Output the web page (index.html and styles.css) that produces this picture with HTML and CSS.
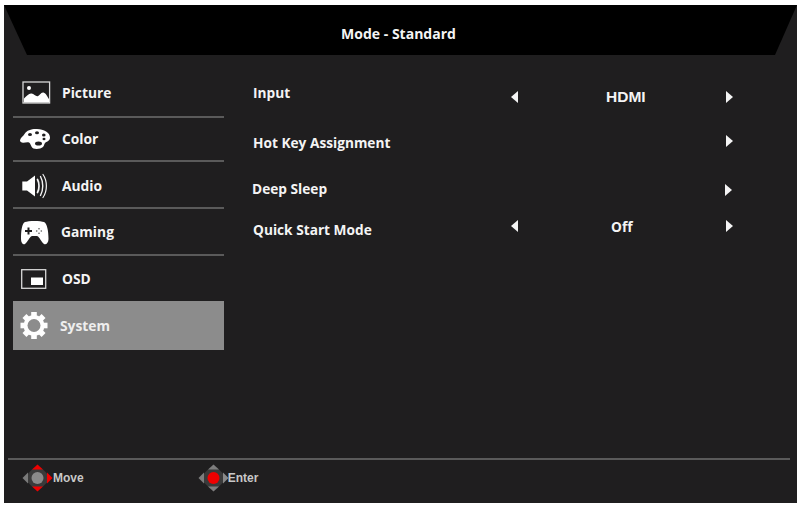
FILE: index.html
```html
<!DOCTYPE html>
<html lang="en">
<head>
<meta charset="utf-8">
<title>Mode - Standard</title>
<link rel="stylesheet" href="styles.css">
</head>
<body>
<div class="panel">
  <header class="header">Mode - Standard</header>
  <main class="main">
    <nav class="sidebar">
      <div class="item item-picture">
        <svg class="icon" width="49" height="24" viewBox="0 0 49 24"><rect x="10" y="1" width="26.600" height="21" fill="none" stroke="#d8d8d8" stroke-width="1.300"/><circle cx="16" cy="7" r="2" fill="#fff"/><path d="M11 21.400V17.600C13.500 15 16 12 18.500 12.500C21 13 22.500 15.400 24.500 15.200C26.500 15 28 10.800 30.500 11.500C33 12.200 34.500 16 36 18V21.400Z" fill="#fff"/></svg>
        <span class="label">Picture</span>
      </div>
      <div class="item item-color">
        <svg class="icon" width="49" height="22" viewBox="0 0 49 22"><path fill="#fff" fill-rule="evenodd" d="M7 12.200C7.500 9.500 10 8.500 11.500 6C14 2 19 .7 24 1C31 1.300 37 4.500 37 9.500C37 12.500 34.500 13.400 32.500 14.500C31 15.500 31.500 17.500 30 19C28 21 23 21.500 20.500 20.500C18 19.500 18 15.800 16 14.500C14 13.500 12 15 10 14.800C8.500 14.600 6.800 13.800 7 12.200ZM15 6.500a2 1.500 0 1 0 4 0a2 1.500 0 1 0-4 0ZM22 4.800a2 1.500 0 1 0 4 0a2 1.500 0 1 0-4 0ZM29 7a1.800 1.500 0 1 0 3.600 0a1.800 1.500 0 1 0-3.600 0ZM29.500 11a1.500 1.300 0 1 0 3 0a1.500 1.300 0 1 0-3 0ZM22 15.500a3.500 2 0 1 0 7 0a3.500 2 0 1 0-7 0Z"/></svg>
        <span class="label">Color</span>
      </div>
      <div class="item item-audio">
        <svg class="icon" width="49" height="26" viewBox="0 0 49 26"><path fill="#fff" d="M9.300 8.500H14L22 2.500V23.500L14 17.500H9.300Z"/><g fill="none" stroke="#f4f4f4" stroke-linecap="round"><path stroke-width="1.700" d="M24.500 6.500C26.500 10 26.500 16 24.500 19.500"/><path stroke-width="1.400" d="M27.500 3.500C30.500 9 30.500 17 27.500 22.500"/><path stroke-width="1.200" d="M30 1.500C34.500 8 34.500 18 30 24.500"/></g></svg>
        <span class="label">Audio</span>
      </div>
      <div class="item item-gaming">
        <svg class="icon" width="49" height="26" viewBox="0 0 49 26"><path fill="#fff" d="M12 3C15 1.500 28 1.500 31 3C34 4 35.500 12 35.500 20C35.500 24 33 26 31 25C28 23 27 18 24 17H19C16 18 15 23 12 25C10 26 8 24 8 20C8 12 9 4 12 3Z"/><path fill="#1f1e1f" d="M12 11H14.500V8.500H16.500V11H19V13H16.500V15.500H14.500V13H12Z"/><g fill="#555"><circle cx="26" cy="9.800" r=".8"/><circle cx="28.300" cy="12" r=".8"/><circle cx="23.700" cy="12" r=".8"/><circle cx="26" cy="14.200" r=".8"/></g></svg>
        <span class="label">Gaming</span>
      </div>
      <div class="item item-osd">
        <svg class="icon" width="49" height="20" viewBox="0 0 49 20"><rect x="8.700" y=".7" width="24" height="18.600" fill="none" stroke="#d8d8d8" stroke-width="1.300"/><rect x="18" y="8.500" width="12" height="7.500" fill="#fff"/></svg>
        <span class="label">OSD</span>
      </div>
      <div class="item item-system">
        <svg class="icon" width="49" height="29" viewBox="0 0 49 29"><g fill="#fff"><rect x="18.200" y="1" width="5.600" height="27"/><rect x="18.200" y="1" width="5.600" height="27" transform="rotate(45 21 14.500)"/><rect x="18.200" y="1" width="5.600" height="27" transform="rotate(90 21 14.500)"/><rect x="18.200" y="1" width="5.600" height="27" transform="rotate(135 21 14.500)"/></g><circle cx="21" cy="14.500" r="10.500" fill="#fff"/><circle cx="21" cy="14.500" r="6.500" fill="#8c8c8c"/></svg>
        <span class="label">System</span>
      </div>
    </nav>
    <section class="content">
      <div class="row row-input">
        <span class="row-label">Input</span>
        <span class="arrow-left"></span>
        <span class="value value-input">HDMI</span>
        <span class="arrow-right"></span>
      </div>
      <div class="row row-hotkey">
        <span class="row-label">Hot Key Assignment</span>
        <span class="arrow-right"></span>
      </div>
      <div class="row row-sleep">
        <span class="row-label">Deep Sleep</span>
        <span class="arrow-right"></span>
      </div>
      <div class="row row-quick">
        <span class="row-label">Quick Start Mode</span>
        <span class="arrow-left"></span>
        <span class="value value-off">Off</span>
        <span class="arrow-right"></span>
      </div>
    </section>
  </main>
  <footer class="footer">
    <div class="hint hint-move">
      <svg width="31" height="28" viewBox="0 0 31 28"><path fill="#3a3a3a" d="M10.500 5H20.500L25 9.500V18.500L20.500 23H10.500L6 18.500V9.500Z"/><path fill="#f00000" d="M15.500 .5L21 5.500H10Z"/><path fill="#f00000" d="M15.500 27.500L10 22.500H21Z"/><path fill="#f00000" d="M30.500 14L25 19.500V8.500Z"/><path fill="#7a7a7a" d="M.5 14L6 8.500V19.500Z"/><circle cx="15.500" cy="14" r="6" fill="#8a8a8a"/></svg>
      <span>Move</span>
    </div>
    <div class="hint hint-enter">
      <svg width="31" height="28" viewBox="0 0 31 28"><path fill="#3a3a3a" d="M10.500 5H20.500L25 9.500V18.500L20.500 23H10.500L6 18.500V9.500Z"/><path fill="#7d7d7d" d="M15.500 .5L21 5.500H10Z"/><path fill="#7d7d7d" d="M15.500 27.500L10 22.500H21Z"/><path fill="#8a8a8a" d="M30.500 14L25 19.500V8.500Z"/><path fill="#7d7d7d" d="M.5 14L6 8.500V19.500Z"/><circle cx="15.500" cy="14" r="6" fill="#f00000"/></svg>
      <span class="hint-enter-label">Enter</span>
    </div>
  </footer>
</div>
</body>
</html>
```
FILE: styles.css
```css
* { box-sizing: border-box; }
html, body { margin: 0; padding: 0; background: #fff; }
body { font-family: "Open Sans", "Liberation Sans", sans-serif; }
.panel {
  width: 793px;
  height: 498px;
  margin: 5px 0 0 4px;
  background: #1f1e1f;
  display: flex;
  flex-direction: column;
}
.header {
  height: 50px;
  flex: none;
  background: #000;
  clip-path: polygon(0 0, 100% 0, 771px 100%, 23px 100%);
  color: #f4f4f4;
  font-weight: 700;
  font-size: 14px;
  display: flex;
  align-items: center;
  justify-content: center;
  padding: 7px 4px 0 0;
}
.main { flex: 1; display: flex; }
.sidebar {
  width: 211px;
  margin: 15px 0 0 9px;
  flex: none;
}
.item {
  display: flex;
  align-items: center;
  border-bottom: 2px solid #5a5a5a;
  color: #f4f4f4;
  font-weight: 700;
  font-size: 13.800px;
}
.icon { flex: none; }
.label { margin-bottom: 1px; }
.item-picture { height: 48px; }
.item-color { height: 44px; }
.item-audio { height: 47px; padding-top: 3px; }
.item-gaming { height: 47px; }
.item-osd { height: 45px; border-bottom: 0; }
.item-system { height: 49px; border-bottom: 0; background: #8c8c8c; color: #eee; }
.item-gaming .label { margin-left: -1px; }
.item-system .label { margin-left: -2px; }
.content { flex: 1; padding: 31px 0 0 29px; color: #f4f4f4; font-size: 13.700px; font-weight: 700; }
.row { display: flex; align-items: center; position: relative; }
.row-label { width: 255px; flex: none; }
.row-input { height: 20px; }
.arrow-left, .arrow-right {
  width: 0; height: 0; flex: none;
  border-top: 6.500px solid transparent;
  border-bottom: 6.500px solid transparent;
}
.arrow-left { border-right: 7px solid #f4f4f4; margin-left: 3px; }
.arrow-right { border-left: 7px solid #f4f4f4; }
.value { flex: none; }
.row-input .row-label { margin-top: -8px; }
.row-input .arrow-left, .row-input .arrow-right, .row-input .value { margin-top: 2px; }
.value-input { width: 208px; padding-left: 88px; font-size: 15.500px; font-family: "Liberation Sans", sans-serif; font-weight: 700; }
.value-off { width: 208px; padding-left: 93px; }
.row-hotkey { margin-top: 26px; height: 20px; }
.row-hotkey .arrow-right { margin-left: 218px; margin-top: -3px; }
.row-sleep { margin-top: 26px; height: 20px; left: -1px; }
.row-sleep .arrow-right { margin-left: 218px; margin-top: 4px; }
.row-quick { margin-top: 21px; height: 20px; }
.row-quick .arrow-left, .row-quick .arrow-right, .row-quick .value { margin-top: -6px; }
.footer {
  flex: none;
  height: 45px;
  margin: 0 7px 0 4px;
  border-top: 2px solid #5a5a5a;
  display: flex;
  align-items: center;
  color: #c8c8c8;
  font-family: "Liberation Sans", Arial, sans-serif;
  font-size: 12px;
  font-weight: 700;
  padding: 0 0 8px 14px;
}
.hint { display: flex; align-items: center; }
.hint-enter { margin-left: 114px; }
.hint-enter-label { margin-left: -1px; }
```
